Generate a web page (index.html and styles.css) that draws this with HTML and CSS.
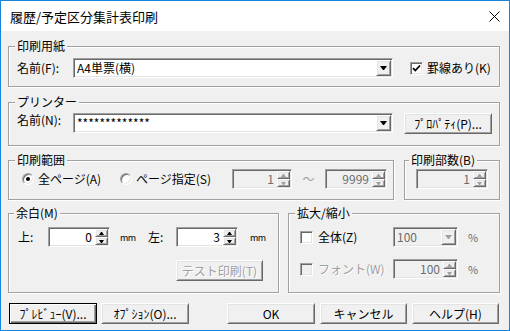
FILE: index.html
```html
<!DOCTYPE html>
<html lang="ja">
<head>
<meta charset="UTF-8">
<title>履歴/予定区分集計表印刷</title>
<link rel="stylesheet" href="styles.css">
</head>
<body>
    <div class="window">
        <div class="titlebar">
            <span class="title">履歴/予定区分集計表印刷</span>
            <svg class="close" width="11" height="11" viewBox="0 0 11 11"><path d="M0.5 0.5L10.5 10.5M10.5 0.5L0.5 10.5" stroke="#000" stroke-width="1" fill="none"/></svg>
        </div>
        <div class="content">
            <div class="group paper">
                <span class="legend">印刷用紙</span>
                <div class="row">
                    <span class="lbl">名前(F):</span>
                    <div class="combo sunken w320">
                        <span class="combo-text">A4単票(横)</span>
                        <span class="drop raised"><i class="tri"></i></span>
                    </div>
                    <span class="check sunken checked"><svg width="9" height="9" viewBox="0 0 9 9"><path d="M1 4.2l2.3 2.3L8 1.5" fill="none" stroke="#000" stroke-width="1.8"/></svg></span>
                    <span class="check-label">罫線あり(K)</span>
                </div>
            </div>

            <div class="group printer">
                <span class="legend">プリンター</span>
                <div class="row top">
                    <span class="lbl">名前(N):</span>
                    <div class="combo sunken w320">
                        <span class="combo-text">*************</span>
                        <span class="drop raised"><i class="tri"></i></span>
                    </div>
                    <span class="btn raised props">ﾌﾟﾛﾊﾟﾃｨ(P)...</span>
                </div>
            </div>

            <div class="split mid">
                <div class="group range">
                    <span class="legend">印刷範囲</span>
                    <div class="row">
                        <span class="radio on"></span>
                        <span class="radio-label r1">全ページ(A)</span>
                        <span class="radio"></span>
                        <span class="radio-label r2">ページ指定(S)</span>
                        <div class="spin sunken off w60">
                            <span class="spin-val">1</span>
                            <span class="spin-btns"><span class="sbtn raised"><i class="up"></i></span><span class="sbtn raised"><i class="down"></i></span></span>
                        </div>
                        <span class="tilde">～</span>
                        <div class="spin sunken off w62">
                            <span class="spin-val">9999</span>
                            <span class="spin-btns"><span class="sbtn raised"><i class="up"></i></span><span class="sbtn raised"><i class="down"></i></span></span>
                        </div>
                    </div>
                </div>
                <div class="group copies">
                    <span class="legend">印刷部数(B)</span>
                    <div class="row">
                        <div class="spin sunken off w72">
                            <span class="spin-val">1</span>
                            <span class="spin-btns"><span class="sbtn raised"><i class="up"></i></span><span class="sbtn raised"><i class="down"></i></span></span>
                        </div>
                    </div>
                </div>
            </div>

            <div class="split low">
                <div class="group margin">
                    <span class="legend">余白(M)</span>
                    <div class="row">
                        <span class="lbl short">上:</span>
                        <div class="spin sunken w62">
                            <span class="spin-val">0</span>
                            <span class="spin-btns"><span class="sbtn raised"><i class="up"></i></span><span class="sbtn raised"><i class="down"></i></span></span>
                        </div>
                        <span class="unit u1">mm</span>
                        <span class="lbl left">左:</span>
                        <div class="spin sunken w62">
                            <span class="spin-val">3</span>
                            <span class="spin-btns"><span class="sbtn raised"><i class="up"></i></span><span class="sbtn raised"><i class="down"></i></span></span>
                        </div>
                        <span class="unit u2">mm</span>
                    </div>
                    <div class="row second">
                        <span class="btn raised test dim">テスト印刷(T)</span>
                    </div>
                </div>
                <div class="group zoom">
                    <span class="legend">拡大/縮小</span>
                    <div class="row">
                        <span class="check sunken"></span>
                        <span class="check-label z1">全体(Z)</span>
                        <div class="combo sunken off w65">
                            <span class="combo-text">100</span>
                            <span class="drop raised"><i class="tri"></i></span>
                        </div>
                        <span class="pct">%</span>
                    </div>
                    <div class="row third">
                        <span class="check sunken off"></span>
                        <span class="check-label z1 dim">フォント(W)</span>
                        <div class="spin sunken off w65">
                            <span class="spin-val">100</span>
                            <span class="spin-btns"><span class="sbtn raised"><i class="up"></i></span><span class="sbtn raised"><i class="down"></i></span></span>
                        </div>
                        <span class="pct">%</span>
                    </div>
                </div>
            </div>

            <div class="buttons">
                <span class="btn raised default b1">ﾌﾟﾚﾋﾞｭｰ(V)...</span>
                <span class="btn raised b2">ｵﾌﾟｼｮﾝ(O)...</span>
                <span class="btn raised b3">OK</span>
                <span class="btn raised b4">キャンセル</span>
                <span class="btn raised b5">ヘルプ(H)</span>
            </div>
        </div>
    </div>
</body>
</html>
```

FILE: styles.css
```css
html, body {
    margin: 0;
    padding: 0;
}
body {
    background: #fff;
    font-family: "Noto Sans CJK JP", "Noto Sans", sans-serif;
    font-size: 12px;
    line-height: 14px;
    color: #000;
}
.window {
    width: 510px;
    height: 331px;
    box-sizing: border-box;
    border: 1px solid #1883d7;
    background: #f0f0f0;
}
.titlebar {
    height: 30px;
    background: #fff;
    display: flex;
    align-items: center;
    justify-content: space-between;
    padding: 0 9px 0 9px;
}
.title {
    font-size: 13px;
    padding-top: 2px;
}
.content {
    padding: 15px 9px 0 7px;
}

/* group boxes */
.group {
    position: relative;
    box-sizing: border-box;
    border: 1px solid #a0a0a0;
    box-shadow: 1px 1px 0 #fff, inset 1px 1px 0 #fff;
}
.legend {
    position: absolute;
    top: -8px;
    left: 6px;
    padding: 0 2px;
    background: #f0f0f0;
}
.paper {
    height: 41px;
    padding: 11px 0 0 8px;
}
.printer {
    height: 44px;
    margin-top: 15px;
    padding: 10px 0 0 8px;
}
.split {
    display: flex;
}
.mid {
    margin-top: 14px;
}
.range {
    width: 386px;
    height: 40px;
    padding: 8px 0 0 13px;
}
.copies {
    width: 96px;
    height: 40px;
    margin-left: 10px;
    padding: 8px 0 0 11px;
}
.copies .legend {
    left: 4px;
}
.low {
    margin-top: 13px;
}
.margin {
    width: 271px;
    height: 80px;
    padding: 13px 0 0 9px;
}
.margin .legend {
    left: 5px;
}
.zoom {
    width: 212px;
    height: 80px;
    margin-left: 9px;
    padding: 13px 0 0 11px;
}

.row {
    display: flex;
    align-items: center;
    height: 20px;
}
.row.top {
    align-items: flex-start;
    height: 21px;
}
.row.second {
    margin-top: 13px;
    height: 21px;
}
.row.third {
    margin-top: 12px;
}
.lbl {
    width: 56px;
}
.lbl.short {
    width: 30px;
}
.lbl.left {
    width: 28px;
}

/* 3d edges */
.sunken {
    box-sizing: border-box;
    border: 1px solid;
    border-color: #a0a0a0 #fff #fff #a0a0a0;
    box-shadow: inset 1px 1px 0 #696969, inset -1px -1px 0 #e3e3e3;
    background: #fff;
    padding: 1px;
}
.sunken.off {
    background: #f0f0f0;
}
.raised {
    box-sizing: border-box;
    background: #f0f0f0;
    border: 1px solid;
    border-color: #fff #696969 #696969 #fff;
    box-shadow: inset 1px 1px 0 #e3e3e3, inset -1px -1px 0 #a0a0a0;
}

/* combo boxes */
.combo {
    display: flex;
    height: 20px;
}
.w320 { width: 320px; }
.w60 { width: 60px; }
.w62 { width: 62px; }
.w65 { width: 65px; }
.w72 { width: 72px; }
.combo-text {
    flex: 1;
    padding-left: 2px;
    line-height: 16px;
    white-space: nowrap;
    overflow: hidden;
}
.combo.off .combo-text {
    color: #6d6d6d;
}
.drop {
    width: 15px;
    height: 16px;
    display: flex;
    align-items: center;
    justify-content: center;
}
.tri {
    width: 1px;
    height: 0;
    border-left: 3px solid transparent;
    border-right: 3px solid transparent;
    border-top: 4px solid #000;
}
.combo.off .tri {
    border-top-color: #a0a0a0;
}

/* spin boxes */
.spin {
    display: flex;
    height: 20px;
}
.spin-val {
    flex: 1;
    text-align: right;
    padding-right: 3px;
    line-height: 16px;
}
.spin.off .spin-val {
    color: #6d6d6d;
}
.spin-btns {
    width: 13px;
    display: flex;
    flex-direction: column;
}
.sbtn {
    flex: 1;
    display: flex;
    align-items: center;
    justify-content: center;
}
.up, .down {
    width: 1px;
    height: 0;
    border-left: 2px solid transparent;
    border-right: 2px solid transparent;
}
.up {
    border-bottom: 3px solid #000;
}
.down {
    border-top: 3px solid #000;
}
.spin.off .up {
    border-bottom-color: #a0a0a0;
}
.spin.off .down {
    border-top-color: #a0a0a0;
}

/* check boxes and radios */
.check {
    width: 13px;
    height: 13px;
    margin-left: 17px;
    display: flex;
    align-items: center;
    justify-content: center;
}
.zoom .check {
    margin-left: 0;
}
.check-label {
    margin-left: 4px;
}
.check-label.z1 {
    width: 75px;
    margin-left: 5px;
}
.radio {
    width: 12px;
    height: 12px;
    box-sizing: border-box;
    border-radius: 50%;
    border: 1px solid;
    border-color: #a0a0a0 #fff #fff #a0a0a0;
    box-shadow: inset 1px 1px 0 #696969, inset -1px -1px 0 #e3e3e3;
    background: #fff;
    display: flex;
    align-items: center;
    justify-content: center;
}
.radio.on::after {
    content: "";
    width: 4px;
    height: 4px;
    border-radius: 50%;
    background: #000;
}
.radio-label {
    margin-left: 4px;
}
.r1 { width: 82px; }
.r2 { width: 96px; }
.tilde {
    width: 33px;
    text-align: center;
    color: #a0a0a0;
}
.unit {
    width: 28px;
    font-size: 9px;
    letter-spacing: -0.5px;
    padding-top: 2px;
}
.u1 { margin-left: 10px; }
.u2 { margin-left: 12px; }
.pct {
    margin-left: 10px;
    color: #6d6d6d;
    font-size: 11px;
}
.dim {
    color: #a0a0a0;
    text-shadow: 1px 1px 0 #fff;
}

/* push buttons */
.btn {
    display: flex;
    align-items: center;
    justify-content: center;
    height: 21px;
    white-space: nowrap;
}
.props {
    width: 88px;
    margin-left: 11px;
}
.test {
    width: 87px;
    margin-left: 158px;
}
.buttons {
    display: flex;
    margin-top: 10px;
    padding-left: 1px;
}
.default {
    border-color: #000;
    box-shadow: inset 1px 1px 0 #fff, inset -1px -1px 0 #696969, inset -2px -2px 0 #a0a0a0;
}
.b1 { width: 88px; }
.b2 { width: 88px; margin-left: 4px; }
.b3 { width: 88px; margin-left: 38px; }
.b4 { width: 87px; margin-left: 5px; }
.b5 { width: 87px; margin-left: 5px; }
```
